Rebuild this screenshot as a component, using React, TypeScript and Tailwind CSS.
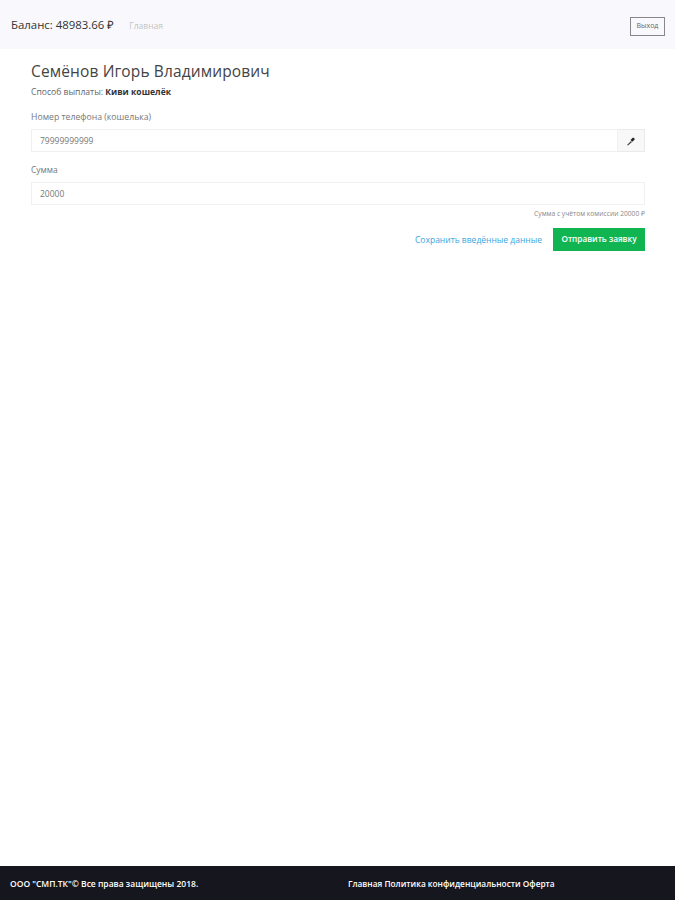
import React from "react";

export default function App() {
  return (
    <div className="w-[675px] h-[900px] flex flex-col bg-white text-[#333] font-['Open_Sans',sans-serif] overflow-hidden">
      <header className="h-[49px] shrink-0 bg-[#f9f9fd] flex items-center pl-[11px] pr-[10px]">
        <span className="mt-[1px] text-[11.4px] text-[#333]">Баланс: 48983.66 ₽</span>
        <span className="ml-[15px] mt-[3px] text-[8.5px] text-[#c4c4c4]">Главная</span>
        <button className="ml-auto mt-[3px] w-[35px] h-[19px] border border-[#888] text-[7px] text-[#666] flex items-center justify-center">Выход</button>
      </header>
      <main className="flex-1 pl-[31px] pr-[30px] pt-[12px]">
        <h1 className="text-[15.5px] leading-[20px] text-[#444] tracking-[0.13px]">Семёнов Игорь Владимирович</h1>
        <p className="mt-[5px] text-[8.6px] leading-[12px] text-[#666]">
          Способ выплаты: <b className="font-bold text-[#333]">Киви кошелёк</b>
        </p>
        <label className="block mt-[13px] text-[8.7px] leading-[12px] text-[#777]">Номер телефона (кошелька)</label>
        <div className="mt-[6px] flex h-[23px]">
          <div className="flex-1 border border-[#f0f0f0] flex items-center pl-[8px] pt-[1px] text-[8.5px] text-[#777]">79999999999</div>
          <div className="w-[27px] border border-l-0 border-[#eaeaea] bg-[#f8f8f8] flex items-center justify-center">
            <svg width="10" height="10" viewBox="0 0 10 10">
              <path d="M1 9 L5 5 L6 6 L2 9.5 Z" fill="#444" />
              <path d="M4.5 4 L7 1.5 L9 3 L6.5 5.8 Z" fill="#222" />
            </svg>
          </div>
        </div>
        <label className="block mt-[12px] text-[8.5px] leading-[12px] text-[#777]">Сумма</label>
        <div className="mt-[6px] h-[23px] border border-[#f0f0f0] flex items-center pl-[8px] pt-[1px] text-[8.5px] text-[#777]">20000</div>
        <p className="mt-[4px] text-right text-[6.7px] leading-[9px] text-[#888]">Сумма с учётом комиссии 20000 ₽</p>
        <div className="mt-[10px] flex items-center justify-end">
          <a className="text-[8.5px] pt-[1px] text-[#3aa5de]">Сохранить введённые данные</a>
          <button className="ml-[11px] w-[92px] h-[23px] bg-[#10b552] text-white text-[8.2px] font-semibold flex items-center justify-center">Отправить заявку</button>
        </div>
      </main>
      <footer className="h-[34px] shrink-0 bg-[#16161f] text-white font-semibold flex items-center pt-[3px]">
        <span className="ml-[10px] w-[338px] text-[8.5px]">ООО "СМП.ТК"© Все права защищены 2018.</span>
        <span className="text-[8.3px]">Главная Политика конфиденциальности Оферта</span>
      </footer>
    </div>
  );
}
